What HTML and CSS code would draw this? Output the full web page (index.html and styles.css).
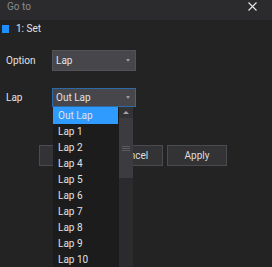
FILE: index.html
```html
<!DOCTYPE html>
<html>
<head>
<meta charset="utf-8">
<link rel="stylesheet" href="styles.css">
</head>
<body>
<div class="dialog">
  <div class="titlebar">
    <span class="title">Go to</span>
    <svg class="close" width="9" height="9" viewBox="0 0 9 9"><path d="M0.5 0.5 L8.5 8.5 M8.5 0.5 L0.5 8.5" stroke="#e6e6e6" stroke-width="1.1"/></svg>
  </div>
  <div class="content">
    <div class="setrow"><span class="check"></span><span>1: Set</span></div>
    <div class="field opt">
      <span class="label">Option</span>
      <div class="select"><span>Lap</span><span class="arrow"></span></div>
    </div>
    <div class="field lap">
      <span class="label">Lap</span>
      <div class="select active"><span>Out Lap</span><span class="arrow"></span>
        <div class="list">
          <div class="items">
            <div class="item sel">Out Lap</div>
            <div class="item">Lap 1</div>
            <div class="item">Lap 2</div>
            <div class="item">Lap 4</div>
            <div class="item">Lap 5</div>
            <div class="item">Lap 6</div>
            <div class="item">Lap 7</div>
            <div class="item">Lap 8</div>
            <div class="item">Lap 9</div>
            <div class="item">Lap 10</div>
          </div>
          <div class="scroll">
            <div class="up"><span class="uparrow"></span></div>
            <div class="thumb"><span class="grip"></span><span class="grip"></span><span class="grip"></span></div>
            <div class="track"></div>
          </div>
        </div>
      </div>
    </div>
    <div class="buttons">
      <div class="btn">OK</div>
      <div class="btn">Cancel</div>
      <div class="btn">Apply</div>
    </div>
  </div>
</div>
</body>
</html>
```
FILE: styles.css
```css
html, body {
  margin: 0;
  padding: 0;
  height: 267px;
  overflow: hidden;
  background: #232323;
}
body {
  font-family: Roboto, "Liberation Sans", sans-serif;
  font-size: 10px;
  color: #e2e2e2;
}
.titlebar {
  height: 20px;
  background: #2b2b2e;
  display: flex;
  justify-content: space-between;
  align-items: flex-start;
  padding: 0 15px 0 7px;
}
.title {
  color: #8c8c8c;
  line-height: 13px;
}
.close {
  margin-top: 1.5px;
}
.content {
  display: flex;
  flex-direction: column;
}
.setrow {
  display: flex;
  align-items: center;
  height: 8px;
  margin-top: 5px;
  padding-left: 2px;
  gap: 7px;
  line-height: 8px;
}
.check {
  width: 7px;
  height: 8px;
  background: #1e8fff;
}
.field {
  display: flex;
  align-items: center;
}
.opt {
  margin-top: 17px;
}
.lap {
  margin-top: 17px;
}
.label {
  width: 46px;
  padding-left: 6px;
}
.select {
  position: relative;
  width: 79px;
  height: 19px;
  background: #47474b;
  border: 1px solid #535357;
  display: flex;
  align-items: center;
  justify-content: space-between;
  padding-left: 3px;
  box-sizing: content-box;
}
.select.active {
  height: 17px;
  border-color: #2e6aa8;
}
.arrow {
  width: 0;
  height: 0;
  border-left: 2.5px solid transparent;
  border-right: 2.5px solid transparent;
  border-top: 3px solid #9a9a9e;
  margin-right: 5px;
}
.list {
  position: absolute;
  left: 0;
  top: 18px;
  width: 80px;
  height: 160px;
  background: #1c1c1c;
  display: flex;
  z-index: 2;
}
.items {
  width: 65px;
  display: flex;
  flex-direction: column;
}
.item {
  height: 16px;
  line-height: 16px;
  padding-left: 5px;
  flex-shrink: 0;
}
.item.sel {
  background: #2f9bff;
  height: 17px;
  line-height: 17px;
}
.scroll {
  width: 14px;
  margin-left: 1px;
  display: flex;
  flex-direction: column;
  background: #2b2b2d;
}
.up {
  height: 11px;
  display: flex;
  align-items: center;
  justify-content: center;
  background: #333336;
}
.uparrow {
  width: 0;
  height: 0;
  border-left: 3px solid transparent;
  border-right: 3px solid transparent;
  border-bottom: 3px solid #a5a5a8;
}
.thumb {
  height: 60px;
  background: #3c3c40;
  display: flex;
  flex-direction: column;
  align-items: center;
  justify-content: center;
  gap: 1px;
}
.grip {
  width: 8px;
  height: 1px;
  background: #5c5c60;
}
.track {
  flex: 1;
}
.buttons {
  display: flex;
  gap: 4px;
  margin-top: 38px;
  padding-left: 39px;
}
.btn {
  width: 58px;
  height: 19px;
  border: 1px solid #4b4b4f;
  background: #333336;
  display: flex;
  align-items: center;
  justify-content: center;
  color: #dedede;
}
```
